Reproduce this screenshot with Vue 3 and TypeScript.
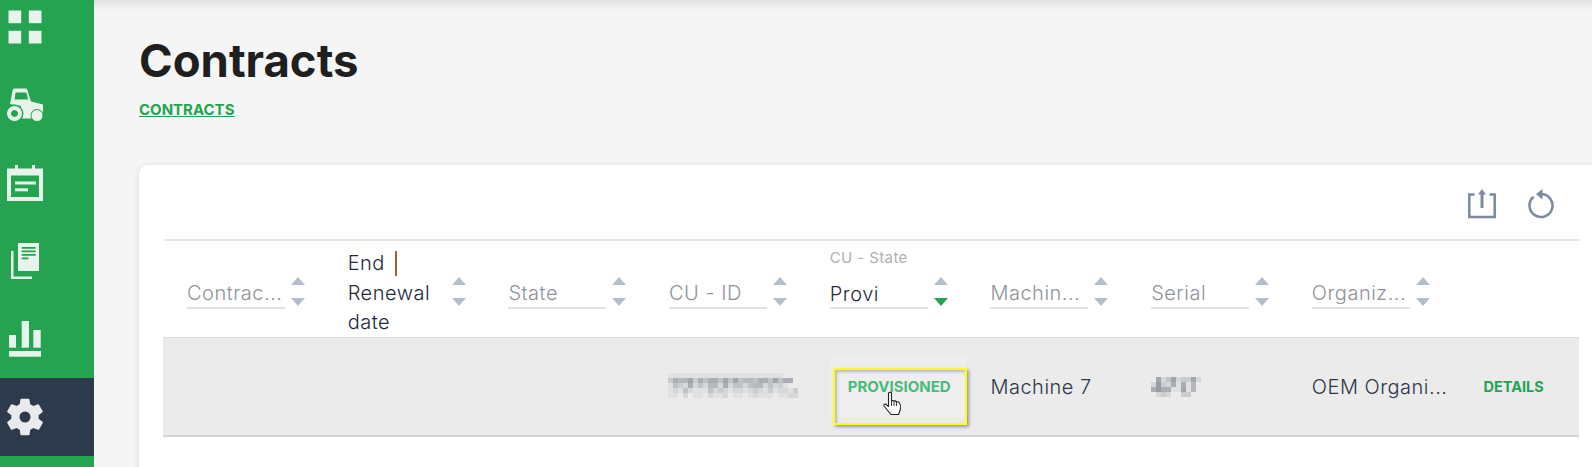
<script setup lang="ts">
interface Column {
  label: string;
  sortActive?: boolean;
  value?: string;
  multiline?: boolean;
}

const columns: Column[] = [
  { label: 'Contrac...' },
  { label: 'End', multiline: true },
  { label: 'State' },
  { label: 'CU - ID' },
  { label: 'CU - State', value: 'Provi', sortActive: true },
  { label: 'Machin...' },
  { label: 'Serial' },
  { label: 'Organiz...' },
];

// mosaic of the blurred-out values: one string per line, one digit per block
const idBlur = [
  '11111111111111111111111000',
  '36557364664747455466474660',
  '14326242552624424552423100',
  '12142111423212212321312213',
  '11020110211201101211101122',
];
const serialBlur = ['0724723372', '2832616150', '6866117150', '0232003300'];

function blocks(rows: string[]) {
  const out: { x: number; y: number; o: number }[] = [];
  rows.forEach((row, y) => {
    row.split('').forEach((c, x) => {
      if (c !== '0') out.push({ x: x * 5, y: y * 5, o: Number(c) / 18 });
    });
  });
  return out;
}

const idBlocks = blocks(idBlur);
const serialBlocks = blocks(serialBlur);
</script>

<template>
  <div class="page">
    <nav class="sidebar">
      <a class="nav-item">
        <svg class="nav-icon" viewBox="0 0 36 36" fill="currentColor">
          <rect x="1.500" y="1.500" width="12.700" height="12.700" />
          <rect x="21.800" y="1.500" width="12.700" height="12.700" />
          <rect x="1.500" y="21.800" width="12.700" height="12.700" />
          <rect x="21.800" y="21.800" width="12.700" height="12.700" />
        </svg>
      </a>
      <a class="nav-item">
        <svg class="nav-icon" viewBox="0 0 36 36" fill="currentColor">
          <path fill-rule="evenodd" d="M3 17 L5.700 3 Q6 1.500 7.500 1.500 H19 Q20 1.500 20.300 3 L24 14.500 L36 17.500 V26.500 H25 V31.500 H14 V19 Z M8.500 5.500 L7.500 12.500 H21 L19.500 5.500 Z" />
          <circle cx="7.500" cy="26.500" r="9" fill="#25a350" />
          <path fill-rule="evenodd" d="M7.500 19 a7.500 7.500 0 1 0 .01 0 Z M7.500 23 a3.500 3.500 0 1 1 -.01 0 Z" />
          <circle cx="30" cy="28.500" r="6.500" fill="#25a350" />
          <circle cx="30" cy="28.500" r="5.500" />
        </svg>
      </a>
      <a class="nav-item">
        <svg class="nav-icon" viewBox="0 0 36 36" fill="currentColor">
          <path fill-rule="evenodd" d="M0 3.500 H8 V0 H11 V3.500 H25 V0 H28 V3.500 H36 V36 H0 Z M4 10.500 V32 H32 V10.500 Z" />
          <rect x="8" y="16.500" width="21" height="3" />
          <rect x="8" y="23.300" width="13" height="3" />
        </svg>
      </a>
      <a class="nav-item">
        <svg class="nav-icon" viewBox="0 0 36 36" fill="currentColor">
          <path fill-rule="evenodd" d="M11 0 H32 V28 H11 Z M14.700 4 V5.800 H28.700 V4 Z M14.700 7.500 V9.300 H28.700 V7.500 Z M14.700 11 V12.800 H28.700 V11 Z M14.700 14.500 V16.300 H21.500 V14.500 Z" />
          <path d="M4 8 H6.500 V33.500 H25 V36 H4 Z" />
        </svg>
      </a>
      <a class="nav-item">
        <svg class="nav-icon" viewBox="0 0 36 36" fill="currentColor">
          <rect x="2" y="14" width="7" height="12.700" />
          <rect x="14.700" y="0" width="7.300" height="26.700" />
          <rect x="26.300" y="9" width="7.400" height="17.700" />
          <rect x="2" y="30" width="32" height="5.700" />
        </svg>
      </a>
      <a class="nav-item nav-item--active">
        <svg class="nav-icon nav-icon--gear" viewBox="0 0 24 24" fill="currentColor">
          <path fill-rule="evenodd" d="M19.400 13c.04-.33.06-.66.06-1s-.02-.67-.06-1l2.100-1.650a.5.5 0 0 0 .12-.64l-2-3.460a.5.5 0 0 0-.61-.22l-2.490 1a7.300 7.300 0 0 0-1.690-.98l-.38-2.650A.49.49 0 0 0 14 2h-4a.49.49 0 0 0-.49.42l-.38 2.650c-.61.25-1.170.59-1.690.98l-2.490-1a.49.49 0 0 0-.61.22l-2 3.460a.49.49 0 0 0 .12.64L4.570 11c-.04.33-.07.66-.07 1s.03.67.07 1l-2.110 1.650a.5.5 0 0 0-.12.64l2 3.460c.12.22.39.3.61.22l2.490-1c.52.4 1.080.73 1.690.98l.38 2.650c.03.24.24.42.49.42h4c.25 0 .46-.18.49-.42l.38-2.650c.61-.25 1.170-.59 1.690-.98l2.490 1c.23.09.49 0 .61-.22l2-3.460a.5.5 0 0 0-.12-.64L19.400 13zM12 15a3 3 0 1 1 0-6 3 3 0 0 1 0 6z" />
        </svg>
      </a>
    </nav>

    <main class="content">
      <h1 class="title">Contracts</h1>
      <a class="crumb">CONTRACTS</a>

      <section class="card">
        <div class="toolbar">
          <svg class="tool-icon" viewBox="0 0 28 30" fill="none" stroke="currentColor" stroke-width="2.500">
            <path d="M6.500 5.500 H1.300 V28 H26.700 V5.500 H21.500" />
            <path d="M14 19 V3" stroke-width="3" />
            <path d="M14 0 L18 5.500 H10 Z" fill="currentColor" stroke="none" />
          </svg>
          <svg class="tool-icon" viewBox="0 0 28 30" fill="none" stroke="currentColor" stroke-width="2.500">
            <path d="M14 5 A11.500 11.500 0 1 1 6.600 7.700" />
            <path d="M15.500 0 V10.500 L9 5.200 Z" fill="currentColor" stroke="none" />
          </svg>
        </div>

        <div class="table-head">
          <div v-for="col in columns" :key="col.label" class="head-cell">
            <div v-if="col.multiline" class="head-title">
              <span>End<span class="caret"></span></span>
              <span>Renewal</span>
              <span>date</span>
            </div>
            <div v-else class="filter">
              <span v-if="col.value" class="filter-label">{{ col.label }}</span>
              <span class="filter-input" :class="{ 'filter-input--filled': col.value }">{{ col.value || col.label }}</span>
            </div>
            <div class="sort">
              <span class="sort-up"></span>
              <span class="sort-down" :class="{ 'sort-down--active': col.sortActive }"></span>
            </div>
          </div>
          <div></div>
        </div>

        <div class="table-row">
          <div class="cell"></div>
          <div class="cell"></div>
          <div class="cell"></div>
          <div class="cell cell--id">
            <svg width="130" height="25" viewBox="0 0 130 25">
              <rect v-for="(b, i) in idBlocks" :key="i" :x="b.x" :y="b.y" width="5" height="5" fill="#2d3748" :fill-opacity="b.o" />
            </svg>
          </div>
          <div class="cell">
            <button class="state-btn" type="button">
              PROVISIONED
              <span class="highlight"></span>
              <svg class="cursor" viewBox="0 0 19 25" width="19" height="25">
                <path d="M5.500 2 Q7 .5 8.500 2 V10 Q10 9 11 10 Q12.500 9.500 13.500 10.800 Q15.500 10.500 16.500 12 Q18 14 17.500 18 L15.500 23.500 H8 L1 15 Q.5 13 2.500 13 L5.500 15.500 Z" fill="#fff" stroke="#222" stroke-width="1.100" stroke-linejoin="round" />
                <path d="M8.500 10 V15 M11 10 V15 M13.500 10.800 V15" stroke="#222" stroke-width=".9" fill="none" />
              </svg>
            </button>
          </div>
          <div class="cell">Machine 7</div>
          <div class="cell">
            <svg width="50" height="20" viewBox="0 0 50 20">
              <rect v-for="(b, i) in serialBlocks" :key="i" :x="b.x" :y="b.y" width="5" height="5" fill="#2d3748" :fill-opacity="b.o" />
            </svg>
          </div>
          <div class="cell">OEM Organi...</div>
          <div class="cell cell--action"><a class="details">DETAILS</a></div>
        </div>
      </section>
    </main>
  </div>
</template>

<style>
html,
body {
  margin: 0;
  height: 100%;
  overflow: hidden;
}
</style>

<style scoped>
.page {
  display: flex;
  height: 467px;
  overflow: hidden;
  font-family: Inter, 'Liberation Sans', sans-serif;
  background: #f5f5f5;
}

.sidebar {
  flex: 0 0 94px;
  background: #25a350;
  margin-top: -12px;
  height: 479px;
}

.nav-item {
  display: flex;
  align-items: center;
  justify-content: center;
  width: 50px;
  height: 78px;
  padding-right: 44px;
  color: #e6f4ec;
}

.nav-item--active {
  background: #2d3a4b;
  color: #e8eaed;
}

.nav-icon {
  flex: none;
  width: 36px;
  height: 36px;
}

.nav-icon--gear {
  width: 44px;
  height: 44px;
}

.content {
  flex: 1;
  min-width: 0;
  padding: 0 0 0 45px;
  box-shadow: inset 0 14px 14px -14px rgba(0, 0, 0, 0.18);
}

.title {
  margin: 33px 0 0;
  font-size: 45.5px;
  line-height: 56px;
  font-weight: 700;
  color: #1f1f1f;
}

.crumb {
  display: inline-block;
  margin-top: 12px;
  font-size: 15px;
  line-height: 17px;
  font-weight: 700;
  color: #25a350;
  text-decoration: underline;
}

.card {
  width: 1460px;
  height: 320px;
  margin-top: 46px;
  border-radius: 9px 0 0 0;
  background: #fff;
  box-shadow: 0 1px 6px rgba(0, 0, 0, 0.12);
  padding: 0 20px 0 24px;
  box-sizing: border-box;
}

.toolbar {
  display: flex;
  justify-content: flex-end;
  gap: 31px;
  height: 76px;
  margin-left: 2px;
  padding: 24px 24px 0 0;
  box-sizing: border-box;
  color: #7b8a9c;
  border-bottom: 2px solid #e5e5e5;
}

.tool-icon {
  width: 28px;
  height: 30px;
}

.table-head {
  display: grid;
  grid-template-columns: repeat(8, 160.7px) 1fr;
  height: 97px;
  box-sizing: border-box;
  border-bottom: 1px solid #dcdcdc;
}

.head-cell {
  display: flex;
  align-items: center;
  gap: 6px;
  padding-left: 24px;
}

.head-title {
  display: flex;
  flex-direction: column;
  width: 98px;
  margin-top: 8px;
  font-size: 20px;
  font-weight: 300;
  letter-spacing: 0.5px;
  line-height: 29.5px;
  color: #1f2a3a;
}

.caret {
  display: inline-block;
  width: 2px;
  height: 25px;
  margin-left: 10px;
  vertical-align: -6px;
  background: #a0622d;
}

.filter {
  position: relative;
  width: 98px;
  margin-top: 8px;
}

.filter-label {
  position: absolute;
  left: 0;
  top: -28px;
  font-size: 15px;
  letter-spacing: 0.4px;
  line-height: 18px;
  white-space: nowrap;
  color: #b0b0b0;
}

.filter-input {
  display: block;
  height: 30px;
  line-height: 32px;
  font-size: 20px;
  font-weight: 300;
  letter-spacing: 0.5px;
  white-space: nowrap;
  color: #8f949b;
  border-bottom: 2px solid #e2e2e2;
}

.filter-input--filled {
  line-height: 34px;
  color: #1f2a3a;
}

.sort {
  display: flex;
  flex-direction: column;
  gap: 13px;
  margin-top: 5px;
}

.sort-up,
.sort-down {
  width: 0;
  height: 0;
  border-left: 7.5px solid transparent;
  border-right: 7.5px solid transparent;
}

.sort-up {
  border-bottom: 8px solid #b5bfcc;
}

.sort-down {
  border-top: 8px solid #b5bfcc;
}

.sort-down--active {
  border-top-color: #25a350;
}

.table-row {
  display: grid;
  grid-template-columns: repeat(8, 160.7px) 1fr;
  height: 99px;
  box-sizing: border-box;
  background: #ebebeb;
  border-bottom: 2px solid #d4d4d4;
}

.cell {
  display: flex;
  align-items: center;
  padding-left: 24px;
  font-size: 20px;
  font-weight: 300;
  letter-spacing: 0.5px;
  color: #2d3748;
  white-space: nowrap;
}

.cell--id {
  padding-left: 23px;
  padding-bottom: 3px;
}

.cell--action {
  padding-left: 35px;
}

.state-btn {
  position: relative;
  flex: none;
  width: 136px;
  height: 60px;
  padding: 0 0 0 3px;
  border: 0;
  background: #eeeeee;
  font: 700 15px Inter, 'Liberation Sans', sans-serif;
  color: #48bb78;
  cursor: pointer;
}

.highlight {
  position: absolute;
  left: 3px;
  top: 11px;
  width: 134px;
  height: 57px;
  box-sizing: border-box;
  border: 2px solid #ffff1a;
  box-shadow: 2px 2px 3px rgba(0, 0, 0, 0.35), inset 2px 2px 3px rgba(0, 0, 0, 0.22);
}

.cursor {
  position: absolute;
  left: 53px;
  top: 34px;
}

.details {
  font-size: 14.5px;
  font-weight: 700;
  letter-spacing: 0;
  color: #25a350;
}
</style>
